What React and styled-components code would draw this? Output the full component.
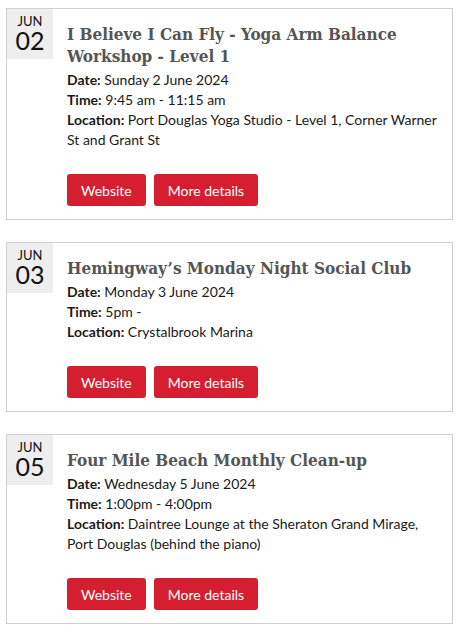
import React from "react";
import styled, { createGlobalStyle } from "styled-components";

const Global = createGlobalStyle`
  body {
    margin: 0;
    background: #fff;
    font-family: Lato, "Open Sans", sans-serif;
    color: #1a1a1a;
  }
`;

const List = styled.div`
  display: flex;
  flex-direction: column;
  gap: 22px;
  padding: 8px 4px 0 6px;
`;

const Card = styled.article`
  display: flex;
  align-items: flex-start;
  border: 1px solid #cfcfcf;
  background: #fff;
`;

const DateBox = styled.div`
  flex: 0 0 46px;
  height: 50px;
  background: #eeeeee;
  display: flex;
  flex-direction: column;
  align-items: center;
  padding-top: 5px;
  box-sizing: border-box;
  color: #111;
`;

const Month = styled.span`
  font-size: 13px;
  line-height: 14px;
`;

const Day = styled.span`
  font-size: 25px;
  line-height: 24px;
`;

const Body = styled.div`
  flex: 1;
  padding: 14px 12px 13px 14px;
`;

const Title = styled.h2`
  margin: 0 0 3px;
  font-family: "DejaVu Serif Condensed", "DejaVu Serif", serif;
  font-stretch: condensed;
  font-weight: bold;
  font-size: 17px;
  line-height: 22px;
  color: #555;
`;

const Line = styled.div`
  font-size: 14px;
  line-height: 20px;
  b {
    font-weight: 700;
  }
`;

const Actions = styled.div`
  display: flex;
  gap: 8px;
  margin-top: 24px;
`;

const Button = styled.a`
  display: inline-flex;
  align-items: center;
  height: 32px;
  padding: 0 14px;
  background: #d51f31;
  color: #fff;
  border-radius: 3px;
  font-size: 14px;
  text-decoration: none;
`;

const events = [
  {
    day: "02",
    title: "I Believe I Can Fly - Yoga Arm Balance Workshop - Level 1",
    date: "Sunday 2 June 2024",
    time: "9:45 am - 11:15 am",
    location: "Port Douglas Yoga Studio - Level 1, Corner Warner St and Grant St",
  },
  {
    day: "03",
    title: "Hemingway\u2019s Monday Night Social Club",
    date: "Monday 3 June 2024",
    time: "5pm -",
    location: "Crystalbrook Marina",
  },
  {
    day: "05",
    title: "Four Mile Beach Monthly Clean-up",
    date: "Wednesday 5 June 2024",
    time: "1:00pm - 4:00pm",
    location: "Daintree Lounge at the Sheraton Grand Mirage, Port Douglas (behind the piano)",
  },
];

export default function App() {
  return (
    <>
      <Global />
      <List>
        {events.map((e) => (
          <Card key={e.day}>
            <DateBox>
              <Month>JUN</Month>
              <Day>{e.day}</Day>
            </DateBox>
            <Body>
              <Title>{e.title}</Title>
              <Line>
                <b>Date:</b> {e.date}
              </Line>
              <Line>
                <b>Time:</b> {e.time}
              </Line>
              <Line>
                <b>Location:</b> {e.location}
              </Line>
              <Actions>
                <Button href="#">Website</Button>
                <Button href="#">More details</Button>
              </Actions>
            </Body>
          </Card>
        ))}
      </List>
    </>
  );
}
